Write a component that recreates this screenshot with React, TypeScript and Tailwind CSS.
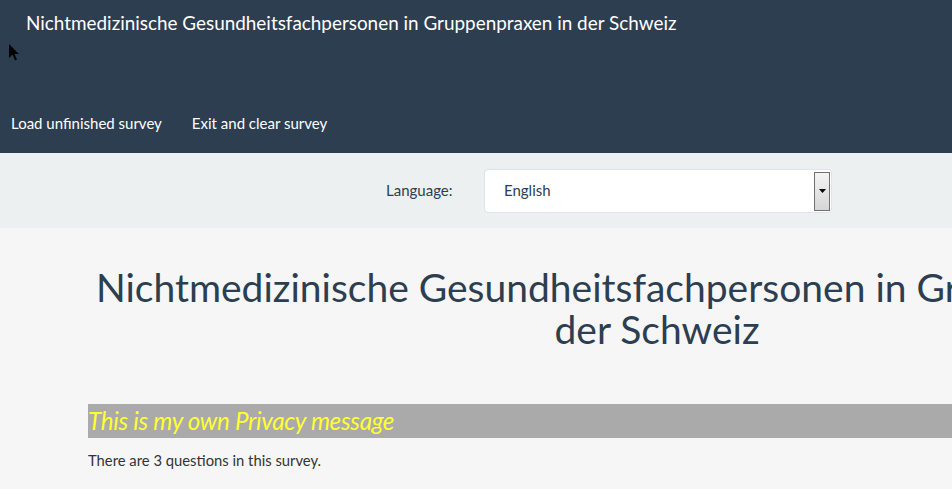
import React from "react";

export default function App() {
  return (
    <div
      className="relative w-[952px] h-[489px] overflow-hidden bg-[#f6f6f6]"
      style={{ fontFamily: "Lato, 'Noto Sans', sans-serif" }}
    >
      {/* top navbar */}
      <header className="h-[153px] bg-[#2c3e50] text-white">
        <div className="pl-[26px] pt-[11px] text-[18.9px] leading-[24px]">
          Nichtmedizinische Gesundheitsfachpersonen in Gruppenpraxen in der Schweiz
        </div>
        <nav className="flex gap-[30px] pl-[11px] pt-[78px] text-[15px] leading-[20px]">
          <span>Load unfinished survey</span>
          <span>Exit and clear survey</span>
        </nav>
      </header>

      {/* language selector */}
      <div className="h-[75px] bg-[#ecf0f1] flex items-center">
        <span className="ml-[386px] w-[98px] text-[15px] text-[#2c3e50]">Language:</span>
        <div className="relative w-[348px] h-[44px] bg-white border border-[#dce4ec] rounded-[4px] flex items-center">
          <span className="pl-[19px] text-[15px] text-[#2c3e50]">English</span>
          <div className="absolute right-[1px] top-[2px] w-[16px] h-[39px] border border-[#707070] bg-gradient-to-b from-[#f4f4f4] to-[#d6d6d6] flex items-center justify-center">
            <svg width="7" height="4" viewBox="0 0 7 4">
              <path d="M0 0h7L3.5 4z" fill="#000" />
            </svg>
          </div>
        </div>
      </div>

      {/* survey heading */}
      <div className="w-[1122px] ml-[96px] pt-[38px] text-center text-[39px] leading-[42px] text-[#2c3e50] whitespace-nowrap">
        <div>Nichtmedizinische Gesundheitsfachpersonen in Gruppenpraxen in</div>
        <div>der Schweiz</div>
      </div>

      {/* privacy message */}
      <div className="ml-[88px] mt-[54px] h-[34px] bg-[#aaaaaa] flex items-center">
        <span className="italic text-[24.2px] text-[#ffff33] tracking-[-0.3px]">This is my own Privacy message</span>
      </div>
      <p className="ml-[88px] mt-[11px] text-[14.8px] text-[#333333]">There are 3 questions in this survey.</p>

      {/* mouse pointer */}
      <svg className="absolute left-[8px] top-[43px]" width="12" height="20" viewBox="0 0 12 20">
        <path d="M1 1v14l3.5-3.5 2.5 6 2-1-2.5-5.5H11z" fill="#000" />
      </svg>
    </div>
  );
}
